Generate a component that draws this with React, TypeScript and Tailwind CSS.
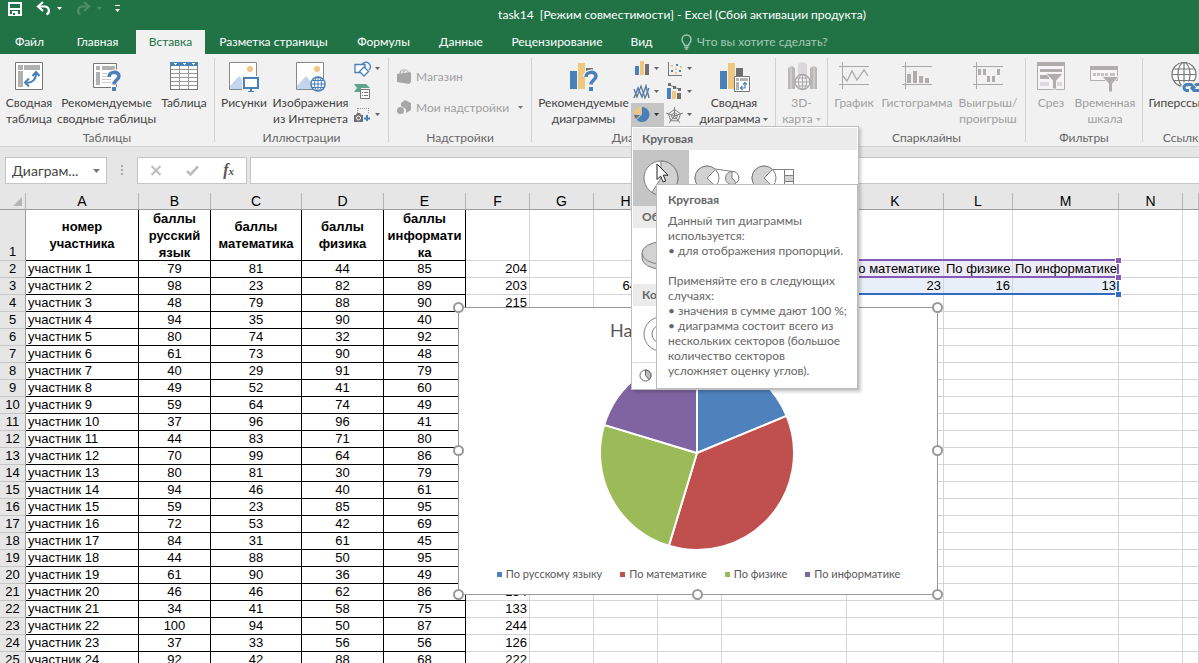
import type { ReactNode } from 'react'
import clsx from 'clsx'

const BLUE = '#4a80b8'
const SAND = '#efc77f'
const DARK = '#6e6e6e'

const tabs = [
  { label: 'Файл', width: 'w-[59px]' },
  { label: 'Главная', width: 'w-[77px]' },
  { label: 'Вставка', width: 'w-[69px]', active: true },
  { label: 'Разметка страницы', width: 'w-[137px]' },
  { label: 'Формулы', width: 'w-[83px]' },
  { label: 'Данные', width: 'w-[72px]' },
  { label: 'Рецензирование', width: 'w-[120px]' },
  { label: 'Вид', width: 'w-[49px]' },
]

const columns = [
  { name: 'A', width: 'w-[113px]' },
  { name: 'B', width: 'w-[72px]' },
  { name: 'C', width: 'w-[91px]' },
  { name: 'D', width: 'w-[82px]' },
  { name: 'E', width: 'w-[82px]' },
  { name: 'F', width: 'w-[64px]' },
  { name: 'G', width: 'w-[64px]' },
  { name: 'H', width: 'w-[64px]' },
  { name: 'I', width: 'w-[64px]' },
  { name: 'J', width: 'w-[125px]' },
  { name: 'K', width: 'w-[97px]' },
  { name: 'L', width: 'w-[69px]' },
  { name: 'M', width: 'w-[106px]' },
  { name: 'N', width: 'w-[64px]' },
  { name: '', width: '' },
]

const headings = [
  ['номер', 'участника'],
  ['баллы', 'русский', 'язык'],
  ['баллы', 'математика'],
  ['баллы', 'физика'],
  ['баллы', 'информати', 'ка'],
]

const scores = [
  [79, 81, 44, 85],
  [98, 23, 82, 89],
  [48, 79, 88, 90],
  [94, 35, 90, 40],
  [80, 74, 32, 92],
  [61, 73, 90, 48],
  [40, 29, 91, 79],
  [49, 52, 41, 60],
  [59, 64, 74, 49],
  [37, 96, 96, 41],
  [44, 83, 71, 80],
  [70, 99, 64, 86],
  [80, 81, 30, 79],
  [94, 46, 40, 61],
  [59, 23, 85, 95],
  [72, 53, 42, 69],
  [84, 31, 61, 45],
  [44, 88, 50, 95],
  [61, 90, 36, 49],
  [46, 46, 62, 86],
  [34, 41, 58, 75],
  [100, 94, 50, 87],
  [37, 33, 56, 56],
  [92, 42, 88, 68],
]

// cells to the right of the score table, keyed by row number
const summary: Record<number, Record<string, string>> = {
  2: { K: 'По математике', L: 'По физике', M: 'По информатике' },
  3: { H: '64,00', K: '23', L: '16', M: '13' },
}

const slices = [
  { label: 'По русскому языку', value: 12, color: '#4f81bd', swatch: 'bg-[#4f81bd]' },
  { label: 'По математике', value: 23, color: '#c0504d', swatch: 'bg-[#c0504d]' },
  { label: 'По физике', value: 16, color: '#9bbb59', swatch: 'bg-[#9bbb59]' },
  { label: 'По информатике', value: 13, color: '#8064a2', swatch: 'bg-[#8064a2]' },
]

export default function App() {
  return (
    <div className="h-screen flex flex-col overflow-hidden bg-[#e6e6e6] font-['Lato','Noto_Sans',sans-serif] text-xs text-[#444]">
      <TitleBar />
      <TabBar />
      <Ribbon />
      <FormulaBar />
      <Sheet />
    </div>
  )
}

function TitleBar() {
  return (
    <header className="flex-none h-[30px] flex bg-[#217346] text-white">
      <div className="w-[165px] flex-none flex items-start">
        <button aria-label="Сохранить" className="ml-2 mt-[2px]">
          <Svg w={14} h={14} crisp>
            <path d="M1 1h12v12H1z" fill="none" stroke="#fff" strokeWidth="2" />
            <path d="M2 6h10v2H2zM4 9h6v4H4z" fill="#fff" />
            <path d="M5 11h2v2H5z" fill="#217346" />
          </Svg>
        </button>
        <button aria-label="Отменить" className="ml-[14px] mt-[1px] flex items-center gap-[5px]">
          <Svg w={16} h={15}>
            <path d="M2 5.5h7a4.2 4.2 0 0 1 1.5 8" fill="none" stroke="#fff" strokeWidth="2.2" />
            <path d="M7 1L2 5.5 7 10" fill="none" stroke="#fff" strokeWidth="2.2" />
          </Svg>
          <Caret className="fill-white" />
        </button>
        <button aria-label="Вернуть" className="ml-[14px] mt-[1px] flex items-center gap-[5px]" disabled>
          <Svg w={16} h={15}>
            <path d="M13 5.5H6a4.2 4.2 0 0 0-1.500 8" fill="none" stroke="#4d8f6b" strokeWidth="2.2" />
            <path d="M8 1l5 4.500L8 10" fill="none" stroke="#4d8f6b" strokeWidth="2.2" />
          </Svg>
          <Caret className="fill-[#4d8f6b]" />
        </button>
        <button aria-label="Настройка панели быстрого доступа" className="ml-[13px] mt-[5px]">
          <Svg w={5} h={8}>
            <path d="M0 0h5v1H0zM0 4h5L2.500 7z" fill="#fff" />
          </Svg>
        </button>
      </div>
      <h1 className="flex-1 text-center leading-[30px] whitespace-pre">
        {'task14  [Режим совместимости] - Excel (Сбой активации продукта)'}
      </h1>
    </header>
  )
}

function TabBar() {
  return (
    <nav className="flex-none h-6 flex bg-[#217346] text-white">
      {tabs.map(tab => (
        <button
          key={tab.label}
          className={clsx('flex-none text-center leading-6 whitespace-nowrap', tab.width, tab.active && 'bg-[#f1f1f1] text-[#217346]')}
        >
          {tab.label}
        </button>
      ))}
      <button className="ml-[14px] flex items-center gap-1 text-[#a6c9b5] whitespace-nowrap">
        <Svg w={13} h={16}>
          <path d="M4.500 11.500C4.500 9.500 2 8.500 2 5.500a4.500 4.500 0 0 1 9 0c0 3-2.500 4-2.500 6zM4.500 13.500h4M5.500 15.300h2" fill="none" stroke="#a6c9b5" strokeWidth="1.400" />
        </Svg>
        Что вы хотите сделать?
      </button>
    </nav>
  )
}

function Ribbon() {
  return (
    <div className="flex-none flex overflow-hidden bg-[#f1f1f1] border-b border-[#d2d2d2]">
      <Group label="Таблицы" width="w-[215px]">
        <BigButton width="w-[58px]" icon={<PivotIcon />} lines={['Сводная', 'таблица']} />
        <BigButton width="w-[97px]" icon={<RecommendedPivotIcon />} lines={['Рекомендуемые', 'сводные таблицы']} />
        <BigButton width="w-[58px]" icon={<TableIcon />} lines={['Таблица']} />
      </Group>
      <Group label="Иллюстрации" width="w-[174px]">
        <BigButton width="w-[58px]" icon={<PictureIcon />} lines={['Рисунки']} />
        <BigButton width="w-[75px]" icon={<OnlinePictureIcon />} lines={['Изображения', 'из Интернета']} />
        <div className="pt-[3px] pl-1">
          <SmallButton label="Фигуры" caret icon={<ShapesIcon />} />
          <SmallButton label="SmartArt" icon={<SmartArtIcon />} />
          <SmallButton label="Снимок" caret icon={<CameraIcon />} />
        </div>
      </Group>
      <Group label="Надстройки" width="w-[143px]">
        <div className="flex-1 pt-[7px] px-2 text-[#a0a0a0]">
          <button className="h-[31px] flex items-center gap-1" disabled>
            <Svg w={15} h={15}>
              <path d="M3 5C3 0 7 0 7.500 3M6 4c0-4 4-4 5-1" fill="none" stroke="#a6a6a6" />
              <path d="M0 5l13-2 1 1v9l-2 2-12-2z" fill="#a6a6a6" />
            </Svg>
            Магазин
          </button>
          <button className="w-full h-[31px] flex items-center gap-1" disabled>
            <Svg w={15} h={15}>
              <path d="M8 0l6 3v7l-5 3V9L4 6V3z" fill="#a6a6a6" />
              <circle cx="3.500" cy="10.500" r="3.500" fill="#a6a6a6" />
            </Svg>
            Мои надстройки
            <Caret className="ml-auto fill-[#777]" />
          </button>
        </div>
      </Group>
      <Group label="Диаграммы" width="w-[244px]" labelClass="pr-[18px]">
        <BigButton width="w-[99px] pl-1" icon={<RecommendedChartIcon />} lines={['Рекомендуемые', 'диаграммы']} />
        <div className="pt-[3px]">
          <SmallButton label="Гистограмма" caret icon={<BarsIcon />} />
          <SmallButton label="График" caret icon={<LinesIcon />} />
          <SmallButton label="Круговая" caret pressed icon={<PieIcon />} />
        </div>
        <div className="pt-[3px]">
          <SmallButton label="Точечная" caret icon={<ScatterIcon />} />
          <SmallButton label="Комбинированная" caret icon={<ComboIcon />} />
          <SmallButton label="Лепестковая" caret icon={<RadarIcon />} />
        </div>
        <BigButton width="w-[74px]" icon={<PivotChartIcon />} lines={['Сводная', 'диаграмма']} caret />
      </Group>
      <Group width="w-[52px]">
        <BigButton width="w-[51px]" icon={<MapIcon />} lines={['3D-', 'карта']} caret disabled />
      </Group>
      <Group label="Спарклайны" width="w-[198px]">
        <BigButton width="w-[52px]" icon={<SparkLineIcon />} lines={['График']} disabled />
        <BigButton width="w-[74px]" icon={<SparkColumnIcon />} lines={['Гистограмма']} disabled />
        <BigButton width="w-[68px]" icon={<WinLossIcon />} lines={['Выигрыш/', 'проигрыш']} disabled />
      </Group>
      <Group label="Фильтры" width="w-[117px]">
        <BigButton width="w-[50px]" icon={<SlicerIcon />} lines={['Срез']} disabled />
        <BigButton width="w-[58px]" icon={<TimelineIcon />} lines={['Временная', 'шкала']} disabled />
      </Group>
      <Group label="Ссылки" width="w-[83px]">
        <BigButton width="w-[82px]" icon={<LinkIcon />} lines={['Гиперссылка']} />
      </Group>
    </div>
  )
}

function Group({ label, width, labelClass, children }: { label?: string; width: string; labelClass?: string; children: ReactNode }) {
  return (
    <section className={clsx('flex-none flex', width)}>
      <div className="flex-1 min-w-0">
        <div className="h-[76px] flex">{children}</div>
        <div className={clsx('h-4 leading-4 text-center text-[#666]', labelClass)}>{label}</div>
      </div>
      <div className="w-px my-1 bg-[#d2d2d2]" />
    </section>
  )
}

type BigButtonProps = { width: string; icon: ReactNode; lines: string[]; caret?: boolean; disabled?: boolean }

function BigButton({ width, icon, lines, caret, disabled }: BigButtonProps) {
  return (
    <button
      disabled={disabled}
      className={clsx('flex-none pt-2 flex flex-col items-center justify-start leading-4 whitespace-nowrap', width, disabled && 'text-[#a0a0a0]')}
    >
      <span className="h-[33px]">{icon}</span>
      {lines.map((line, i) => (
        <span key={line} className="flex items-center gap-[3px]">
          {line}
          {caret && i === lines.length - 1 && <Caret className={disabled ? 'fill-[#b5b5b5]' : 'fill-[#666]'} />}
        </span>
      ))}
    </button>
  )
}

function SmallButton({ label, icon, caret, pressed }: { label: string; icon: ReactNode; caret?: boolean; pressed?: boolean }) {
  return (
    <button aria-label={label} className={clsx('w-[33px] h-[23px] pl-[2px] flex items-center gap-1', pressed && 'bg-[#c5c5c5]')}>
      {icon}
      {caret && <Caret className={pressed ? 'fill-[#333]' : 'fill-[#666]'} />}
    </button>
  )
}

function FormulaBar() {
  return (
    <div className="flex-none h-[46px] pt-[10px] pl-[5px] flex items-start">
      <div className="w-[102px] h-[27px] pl-[6px] pr-[6px] flex items-center bg-white border border-[#c6c6c6]">
        <input aria-label="Имя" defaultValue="Диаграм..." className="flex-1 min-w-0 text-sm outline-none" />
        <button aria-label="Список имён">
          <Svg w={7} h={4}>
            <path d="M0 0h7L3.500 4z" fill="#777" />
          </Svg>
        </button>
      </div>
      <div className="w-[30px] h-[27px] flex items-center justify-center">
        <Svg w={2} h={11} crisp>
          <path d="M0 0h2v2H0zM0 4h2v2H0zM0 8h2v2H0z" fill="#aaa" />
        </Svg>
      </div>
      <div className="w-[110px] h-[27px] px-3 flex items-center justify-between bg-white border border-[#c6c6c6]">
        <button aria-label="Отмена">
          <Svg w={12} h={11}>
            <path d="M1.500 1l9 9M10.500 1l-9 9" stroke="#bdbdbd" strokeWidth="2" />
          </Svg>
        </button>
        <button aria-label="Ввод">
          <Svg w={13} h={11}>
            <path d="M1 6l3.500 3.500L12 1.500" fill="none" stroke="#bdbdbd" strokeWidth="2.600" />
          </Svg>
        </button>
        <button aria-label="Вставить функцию" className="font-['Liberation_Serif',serif] italic font-bold text-base leading-4 text-[#555]">
          f<span className="text-[11px]">x</span>
        </button>
      </div>
      <input aria-label="Строка формул" className="ml-[3px] flex-1 h-[27px] px-2 bg-white border border-r-0 border-[#c6c6c6] outline-none" />
    </div>
  )
}

function Sheet() {
  return (
    <main className="relative flex-1 min-h-0">
      <div className="h-full overflow-hidden">
        <table className="table-fixed w-full border-separate border-spacing-0 font-['Liberation_Sans',Arial,sans-serif] text-[13px] text-black">
          <colgroup>
            <col className="w-[26px]" />
            {columns.map(column => (
              <col key={column.name} className={column.width} />
            ))}
          </colgroup>
          <thead>
            <tr className="h-[17px] leading-4 bg-[#e6e6e6]">
              <th className="p-0 border-r border-b border-r-[#b5b5b5] border-b-[#9b9b9b]">
                <Svg w={9} h={9} className="ml-auto mr-[3px]">
                  <path d="M9 0v9H0z" fill="#b5b5b5" />
                </Svg>
              </th>
              {columns.map(column => (
                <th key={column.name} className="p-0 font-normal text-sm leading-4 border-r border-b border-r-[#b5b5b5] border-b-[#9b9b9b]">
                  {column.name}
                </th>
              ))}
            </tr>
          </thead>
          <tbody className="bg-white">
            <tr>
              <RowHeader n={1} />
              {columns.map((column, i) => (
                <td key={column.name} className={clsx('p-0 border-r border-b', i < 5 ? 'border-black' : 'border-[#d4d4d4]')}>
                  <div className="h-[50px] flex flex-col justify-center text-center font-bold leading-[17px]">
                    {headings[i]?.map(line => (
                      <span key={line}>{line}</span>
                    ))}
                  </div>
                </td>
              ))}
            </tr>
            {scores.map((row, i) => (
              <ScoreRow key={i} n={i + 2} row={row} />
            ))}
          </tbody>
        </table>
      </div>
      <RangeMarks />
      <Chart />
      <ChartMenu />
    </main>
  )
}

function RowHeader({ n }: { n: number }) {
  return (
    <th className="p-0 align-bottom font-normal leading-4 bg-[#e6e6e6] border-r border-b border-r-[#9b9b9b] border-b-[#c6c6c6]">{n}</th>
  )
}

function ScoreRow({ n, row }: { n: number; row: number[] }) {
  const total = row[0] + row[1] + row[2]

  return (
    <tr className="h-[17px] leading-4 whitespace-nowrap">
      <RowHeader n={n} />
      <td className="p-0 pl-[2px] border-r border-b border-black">участник {n - 1}</td>
      {row.map((score, i) => (
        <td key={i} className="p-0 text-center border-r border-b border-black">
          {score}
        </td>
      ))}
      <td className="p-0 pr-[2px] text-right border-r border-b border-[#d4d4d4]">{total}</td>
      {columns.slice(6).map(column => (
        <td
          key={column.name}
          className={clsx(
            'p-0 px-[2px] border-r border-b border-[#d4d4d4]',
            n === 2 ? 'text-left' : 'text-right',
            'JKLM'.includes(column.name) && column.name && n === 2 && 'bg-[#efebf5]',
            'JKLM'.includes(column.name) && column.name && n === 3 && 'bg-[#e8eff9]',
          )}
        >
          {summary[n]?.[column.name]}
        </td>
      ))}
    </tr>
  )
}

// coloured outlines of the ranges the chart reads from
function RangeMarks() {
  return (
    <div className="absolute left-[722px] top-[66px] w-[397px]">
      <div className="h-[19px] border-2 border-[#8559b8]" />
      <div className="h-[17px] border-2 border-t-0 border-[#316ac5]" />
      <span className="absolute right-[-2px] top-[-1px] size-[5px] bg-[#8559b8] outline outline-white" />
      <span className="absolute right-[-2px] top-[16px] size-[5px] bg-[#8559b8] outline outline-white" />
      <span className="absolute right-[-2px] top-[33px] size-[5px] bg-[#316ac5] outline outline-white" />
    </div>
  )
}

function Chart() {
  const total = slices.reduce((sum, slice) => sum + slice.value, 0)
  let passed = 0

  const paths = slices.map(slice => {
    const from = (passed / total) * Math.PI * 2
    passed += slice.value
    const to = (passed / total) * Math.PI * 2
    const point = (angle: number) => `${97 + 97 * Math.sin(angle)} ${97 - 97 * Math.cos(angle)}`
    return `M97 97L${point(from)}A97 97 0 ${to - from > Math.PI ? 1 : 0} 1 ${point(to)}Z`
  })

  return (
    <figure className="absolute left-[458px] top-[114px] w-[480px] h-[288px] flex flex-col items-center bg-white border border-[#999] text-[#595959]">
      <figcaption className="w-full pt-[10px] pl-[151px] text-lg leading-6">На</figcaption>
      <Svg w={194} h={194} className="mt-[14px] mr-[2px]">
        {paths.map((d, i) => (
          <path key={d} d={d} fill={slices[i].color} stroke="#fff" strokeWidth="2" strokeLinejoin="round" />
        ))}
      </Svg>
      <ul className="mt-4 pl-[1px] flex gap-[18px] text-[11px] leading-4 whitespace-nowrap">
        {slices.map(slice => (
          <li key={slice.label} className="flex items-center gap-1">
            <span className={clsx('size-[5px]', slice.swatch)} />
            {slice.label}
          </li>
        ))}
      </ul>
      <Handle className="left-[-6px] top-[-6px]" />
      <Handle className="right-[-6px] top-[-6px]" />
      <Handle className="left-[-6px] top-[137px]" />
      <Handle className="right-[-6px] top-[137px]" />
      <Handle className="left-[-6px] bottom-[-6px]" />
      <Handle className="left-[233px] bottom-[-6px]" />
      <Handle className="right-[-6px] bottom-[-6px]" />
    </figure>
  )
}

function Handle({ className }: { className: string }) {
  return <span className={clsx('absolute size-[11px] rounded-full bg-white border-2 border-[#999]', className)} />
}

function ChartMenu() {
  return (
    <div className="absolute left-[631px] top-[-67px] w-[228px] bg-white border border-[#c0c0c0] p-px shadow-[2px_2px_3px_rgba(0,0,0,0.2)] text-[#666]">
      <MenuHeading>Круговая</MenuHeading>
      <div className="h-14 flex">
        <button aria-label="Круговая" className="w-14 flex items-center justify-center bg-[#c5c5c5]">
          <Svg w={36} h={36}>
            <circle cx="18" cy="18" r="17" fill="#fff" stroke="#7f7f7f" />
            <path d="M18 1a17 17 0 1 1-9 31.500L18 18z" fill="#d2d2d2" stroke="#7f7f7f" />
          </Svg>
        </button>
        <button aria-label="Вторичная круговая" className="w-14 flex items-center justify-center">
          <Svg w={46} h={26}>
            <circle cx="13" cy="13" r="12" fill="#fff" stroke="#7f7f7f" />
            <path d="M13 13l8.500-8.500a12 12 0 1 0 0 17z" fill="#d2d2d2" stroke="#7f7f7f" />
            <path d="M21 4l18 2.500M21 22l18-2.500" stroke="#7f7f7f" />
            <circle cx="38" cy="13" r="6.500" fill="#d2d2d2" stroke="#7f7f7f" />
            <path d="M38 6.500V13l4.500 5a6.500 6.500 0 0 0-4.500-11.500z" fill="#fff" stroke="#7f7f7f" />
          </Svg>
        </button>
        <button aria-label="Вторичная гистограмма" className="w-14 flex items-center justify-center">
          <Svg w={44} h={26}>
            <circle cx="13" cy="13" r="12" fill="#fff" stroke="#7f7f7f" />
            <path d="M13 13l8.500-8.500a12 12 0 1 0 0 17z" fill="#d2d2d2" stroke="#7f7f7f" />
            <path d="M21 4.500h22M21 21.500h22" stroke="#7f7f7f" />
            <path d="M33.500 4.500h9v17h-9z" fill="#fff" stroke="#7f7f7f" />
            <path d="M33.500 10.500h9v6h-9z" fill="#d2d2d2" stroke="#7f7f7f" />
          </Svg>
        </button>
      </div>
      <MenuHeading>Об</MenuHeading>
      <div className="h-14 pl-2 flex items-center">
        <button aria-label="Объемная круговая">
          <Svg w={40} h={30}>
            <path d="M1 12v5a19 11 0 0 0 38 0v-5z" fill="#d2d2d2" stroke="#7f7f7f" />
            <ellipse cx="20" cy="12" rx="19" ry="11" fill="#d2d2d2" stroke="#7f7f7f" />
          </Svg>
        </button>
      </div>
      <MenuHeading>Ко</MenuHeading>
      <div className="h-14 flex">
        <button aria-label="Кольцевая" className="w-14 flex items-center justify-center">
          <Svg w={36} h={36}>
            <circle cx="18" cy="18" r="17" fill="#fff" stroke="#7f7f7f" />
            <circle cx="18" cy="18" r="9" fill="#fff" stroke="#7f7f7f" />
          </Svg>
        </button>
      </div>
      <button aria-label="Другие круговые диаграммы" className="w-full h-[26px] pl-[6px] flex items-center border-t border-[#d8d8d8]">
        <Svg w={13} h={13}>
          <circle cx="6.500" cy="6.500" r="5.500" fill="#fff" stroke="#666" />
          <path d="M6.500 1a5.500 5.500 0 0 1 3.700 9.600L6.500 6.500z" fill="#bbb" stroke="#666" />
        </Svg>
      </button>
      <div role="tooltip" className="absolute left-6 top-[57px] w-[202px] h-[205px] pt-[7px] pl-[11px] bg-white border border-[#bcbcbc] leading-[15px] whitespace-pre">
        <p className="font-bold mb-[6px]">Круговая</p>
        <p>{'Данный тип диаграммы\nиспользуется:\n• для отображения пропорций.'}</p>
        <p className="mt-[15px]">
          {'Применяйте его в следующих\nслучаях:\n• значения в сумме дают 100 %;\n• диаграмма состоит всего из\nнескольких секторов (большое\nколичество секторов\nусложняет оценку углов).'}
        </p>
      </div>
      <Svg w={13} h={20} className="absolute left-6 top-9">
        <path d="M1 1v15.500l3.600-3.400 2.600 5.900 2.600-1.100-2.600-5.700H12z" fill="#fff" stroke="#222" />
      </Svg>
    </div>
  )
}

function MenuHeading({ children }: { children: ReactNode }) {
  return <h2 className="h-[22px] pl-[9px] leading-[22px] bg-[#ebebeb] font-bold">{children}</h2>
}

type SvgProps = { w: number; h: number; crisp?: boolean; className?: string; children: ReactNode }

function Svg({ w, h, crisp, className, children }: SvgProps) {
  return (
    <svg width={w} height={h} viewBox={`0 0 ${w} ${h}`} shapeRendering={crisp ? 'crispEdges' : undefined} className={clsx('block flex-none', className)}>
      {children}
    </svg>
  )
}

function Caret({ className }: { className?: string }) {
  return (
    <svg width="5" height="3" viewBox="0 0 5 3" className={clsx('block flex-none', className)}>
      <path d="M0 0h5L2.500 3z" />
    </svg>
  )
}

function PivotIcon() {
  return (
    <Svg w={28} h={30}>
      <path d="M.5.5h27v27H.5z" fill="#fff" stroke="#777" />
      <path d="M3 3h5v5H3zM9 3h16v5H9zM3 9h5v16H3z" fill="#b1b1b1" />
      <path d="M11 20.500c6 1 10-3 10-9" fill="none" stroke={BLUE} strokeWidth="2" />
      <path d="M17.500 14l3.500-4 3.500 4M14 16.500l-4 4 4 4" fill="none" stroke={BLUE} strokeWidth="2" />
    </Svg>
  )
}

function QuestionMark({ x, y }: { x: number; y: number }) {
  return (
    <g transform={`translate(${x} ${y})`} fill="none">
      <path d="M2 6c0-6 10-6 10-1 0 4-5 4-5 8.500M7 16v4" stroke="#f1f1f1" strokeWidth="6" />
      <path d="M2 6c0-6 10-6 10-1 0 4-5 4-5 8.500" stroke={BLUE} strokeWidth="3.500" />
      <path d="M7 16v4" stroke={BLUE} strokeWidth="4" />
    </g>
  )
}

function RecommendedPivotIcon() {
  return (
    <Svg w={28} h={31}>
      <path d="M.5 1.500h23v24H.5z" fill="#fff" stroke="#777" />
      <path d="M3 4h4v4H3zM9 4h13v4H9zM3 10h4v13H3z" fill="#b1b1b1" />
      <path d="M9 11.500h12M9 14.500h9M9 17.500h9M9 20.500h9" stroke="#ccc" />
      <QuestionMark x={14} y={9} />
    </Svg>
  )
}

function TableIcon() {
  return (
    <Svg w={28} h={30} crisp>
      <path d="M.5.5h27v27H.5z" fill="#fff" stroke="#777" />
      <path d="M0 0h28v4H0z" fill={BLUE} />
      <path d="M3 1h4L5 3zM12 1h4l-2 2zM21 1h4l-2 2z" fill="#fff" />
      <path d="M1 7.500h26M1 11.500h26M1 15.500h26M1 19.500h26M1 23.500h26M9.500 4v23M18.500 4v23" stroke="#999" />
    </Svg>
  )
}

function Landscape() {
  return (
    <>
      <path d="M.5.5h27v27H.5z" fill="#fff" stroke="#888" />
      <circle cx="21" cy="7" r="3" fill={SAND} />
      <path d="M1 24l9-10 8 9v4H1z" fill="#c3d5ea" />
    </>
  )
}

function PictureIcon() {
  return (
    <Svg w={30} h={31}>
      <Landscape />
      <path d="M13 14h17v14H13z" fill="#f1f1f1" />
      <path d="M15 16h14v10H15z" fill="#fff" stroke={BLUE} strokeWidth="2" />
      <path d="M21 27h2v2h-2zM19 29h6v1h-6z" fill={BLUE} />
    </Svg>
  )
}

function OnlinePictureIcon() {
  return (
    <Svg w={30} h={31}>
      <Landscape />
      <circle cx="22" cy="22" r="7" fill="#fff" stroke={BLUE} strokeWidth="1.500" />
      <path d="M15 22h14M16 18.500h12M16 25.500h12M22 15v14" stroke={BLUE} fill="none" />
      <ellipse cx="22" cy="22" rx="3.500" ry="7" stroke={BLUE} fill="none" />
    </Svg>
  )
}

function ShapesIcon() {
  return (
    <Svg w={17} h={16}>
      <path d="M8 3.500a4.500 4.500 0 1 1 7 5.500" fill="none" stroke={BLUE} strokeWidth="1.300" />
      <path d="M1 3.500h10v8H1z" fill="#fff" stroke={BLUE} strokeWidth="1.300" />
      <path d="M10 6l4.500 4.500L10 15l-4.500-4.500z" fill="#fff" stroke={BLUE} strokeWidth="1.300" />
    </Svg>
  )
}

function SmartArtIcon() {
  return (
    <Svg w={17} h={17}>
      <path d="M0 1h12l4 4h-9v4H0l3-4z" fill="#5fa38a" />
      <path d="M6.500 6.500h9v9h-9z" fill="#fff" stroke="#777" />
      <path d="M8 9.500h1M10 9.500h4M8 12.500h1M10 12.500h4" stroke="#777" />
    </Svg>
  )
}

function CameraIcon() {
  return (
    <Svg w={17} h={16}>
      <path d="M4 1.500h11M3.500 1v5M14.500 1v6" stroke="#999" strokeDasharray="1 1" />
      <path d="M0 8h2l1-2h3l1 2h2v7H0z" fill={DARK} />
      <circle cx="4.500" cy="11" r="2" fill={DARK} stroke="#fff" />
      <path d="M13 8v6M10 11.500h6" stroke={BLUE} strokeWidth="2" />
    </Svg>
  )
}

function RecommendedChartIcon() {
  return (
    <Svg w={28} h={31}>
      <path d="M0 9h7v18H0z" fill={BLUE} />
      <path d="M8 1h7v26H8z" fill={SAND} />
      <path d="M16 6h7v4h-7z" fill={DARK} />
      <QuestionMark x={14} y={9} />
    </Svg>
  )
}

function BarsIcon() {
  return (
    <Svg w={17} h={15} crisp>
      <path d="M2 5h4v9H2z" fill={BLUE} />
      <path d="M7 0h4v14H7z" fill={SAND} />
      <path d="M12 3h4v11h-4z" fill={DARK} />
    </Svg>
  )
}

function LinesIcon() {
  return (
    <Svg w={17} h={16}>
      <path d="M1 5l3 8L8 2l4 12 4-10" fill="none" stroke={DARK} strokeWidth="1.200" />
      <path d="M1 14L5 4l4 9 4-11 3 12" fill="none" stroke={BLUE} strokeWidth="1.500" />
    </Svg>
  )
}

function PieIcon() {
  return (
    <Svg w={17} h={17}>
      <path d="M9 1a7.500 7.500 0 1 1-5.300 12.800L9 8.500z" fill={BLUE} />
      <path d="M8 1v7H1a7 7 0 0 1 7-7z" fill={SAND} />
      <path d="M1 9h6l-4 4a7 7 0 0 1-2-4z" fill={DARK} />
    </Svg>
  )
}

function ScatterIcon() {
  return (
    <Svg w={17} h={16} crisp>
      <path d="M2.500 1v13.500H16" fill="none" stroke="#777" />
      <path d="M5 9h2v2H5zM10 3h2v2h-2zM13 9h2v2h-2z" fill={BLUE} />
      <path d="M5 4h2v2H5zM9 7h2v2H9zM14 5h2v2h-2zM9 11h2v2H9z" fill={SAND} />
    </Svg>
  )
}

function ComboIcon() {
  return (
    <Svg w={17} h={17}>
      <path d="M1 5h4v11H1z" fill={BLUE} />
      <path d="M6 8h4v8H6z" fill={SAND} />
      <path d="M11 10h4v6h-4z" fill={DARK} />
      <path d="M3 1.500l5 2.500 6 2.500" fill="none" stroke="#777" />
      <path d="M2 0h3v3H2zM7 3h3v3H7zM12 5h3v3h-3z" fill={DARK} />
    </Svg>
  )
}

function RadarIcon() {
  return (
    <Svg w={17} h={16}>
      <path
        d="M8.500 2.500l6 4.300-2.300 7H4.800l-2.300-7zM8.500 5.500l3.200 2.400-1.200 3.700h-4l-1.200-3.700zM8.500 0v9M17 6L8.500 9l5.500 7M3 16l5.500-7L0 6"
        fill="none"
        stroke="#808080"
      />
    </Svg>
  )
}

function PivotChartIcon() {
  return (
    <Svg w={31} h={31}>
      <path d="M1 9h7v18H1z" fill={BLUE} />
      <path d="M9 1h7v26H9z" fill={SAND} />
      <path d="M17 6h7v8h-7z" fill={DARK} />
      <path d="M15.500 14.500h15v15h-15z" fill="#fff" stroke="#777" />
      <path d="M17 16h3v3h-3zM21 16h8v3h-8zM17 20h3v8h-3z" fill="#b1b1b1" />
      <path d="M22 26h4v-5M24 22.500l2-2 2 2M23.500 24l-2 2 2 2" fill="none" stroke={BLUE} strokeWidth="1.200" />
    </Svg>
  )
}

function MapIcon() {
  return (
    <Svg w={32} h={30}>
      <path d="M2 6l4-2 3 2v21H2zM24 6l4-2 3 2v21h-7z" fill="#bab7b7" />
      <path d="M5 4v23M28 4v23" stroke="#cdcaca" strokeWidth="2" />
      <path d="M12 2l4-2 5 2v13h-9z" fill="#dad7da" />
      <circle cx="16.500" cy="20" r="7.500" fill="#f1f1f1" stroke="#a9a9a9" strokeWidth="1.300" />
      <path d="M9 20h15M10.500 16h12M10.500 24h12M16.500 12.500v15" stroke="#a9a9a9" />
      <ellipse cx="16.500" cy="20" rx="4" ry="7.500" fill="none" stroke="#a9a9a9" />
    </Svg>
  )
}

function SparkAxes() {
  return <path d="M0 4.500h30M0 22.500h30M3.500 0v27" stroke="#a9a9a9" />
}

function SparkLineIcon() {
  return (
    <Svg w={30} h={29}>
      <SparkAxes />
      <path d="M4 14l4 5 5-10 5 9 7-10 4 6" fill="none" stroke="#a9a9a9" strokeWidth="1.300" />
    </Svg>
  )
}

function SparkColumnIcon() {
  return (
    <Svg w={30} h={29} crisp>
      <SparkAxes />
      <path d="M5 12h4v9H5zM11 9h4v12h-4zM17 14h4v7h-4zM23 16h4v5h-4z" fill="#b1adad" />
    </Svg>
  )
}

function WinLossIcon() {
  return (
    <Svg w={30} h={29} crisp>
      <SparkAxes />
      <path d="M5 7h3v6H5zM10 7h3v6h-3zM14 14h3v6h-3zM19 14h3v6h-3zM24 7h3v6h-3z" fill="#b1adad" />
    </Svg>
  )
}

function Funnel({ x, y }: { x: number; y: number }) {
  return (
    <path transform={`translate(${x} ${y})`} d="M0 .5h17l-6.500 7v8.500h-4V7.500z" fill="#b1adad" stroke="#f1f1f1" />
  )
}

function SlicerIcon() {
  return (
    <Svg w={28} h={30}>
      <path d="M.5.5h27v27H.5z" fill="#f7f5f7" stroke="#b1adad" />
      <path d="M0 0h28v4H0z" fill="#b1adad" />
      <path d="M3 7h22v3H3zM3 13h9v4H3z" fill="#b1adad" />
      <path d="M3 20h9v4H3zM20 20h5v4h-5z" fill="#dcdadc" />
      <Funnel x={9} y={11} />
    </Svg>
  )
}

function TimelineIcon() {
  return (
    <Svg w={30} h={32}>
      <path d="M.5 4.500h27v14H.5z" fill="#f7f5f7" stroke="#b1adad" />
      <path d="M0 4h28v4H0z" fill="#b1adad" />
      <path d="M3 11h3v3H3zM7 11h3v3H7zM11 11h3v3h-3zM15 11h3v3h-3zM20 11h5v3h-5z" fill="#c4c1c1" />
      <Funnel x={12} y={14} />
    </Svg>
  )
}

function LinkIcon() {
  return (
    <Svg w={32} h={32}>
      <g fill="none" stroke="#777" strokeWidth="1.200">
        <circle cx="16" cy="12.500" r="12" fill="#fff" />
        <ellipse cx="16" cy="12.500" rx="6" ry="12" />
        <path d="M4 12.500h24M6 7h20M6 18.500h20M16 1v24" />
      </g>
      <path d="M26 29h-7a3.500 3.500 0 0 1 0-7h10" fill="none" stroke="#f1f1f1" strokeWidth="5" />
      <path d="M21 28.500h-2a3 3 0 0 1 0-6h4l4 4M32 22.500h-3a3 3 0 0 0-2 1M23 25l3 3.500h6" fill="none" stroke={BLUE} strokeWidth="3" />
    </Svg>
  )
}
